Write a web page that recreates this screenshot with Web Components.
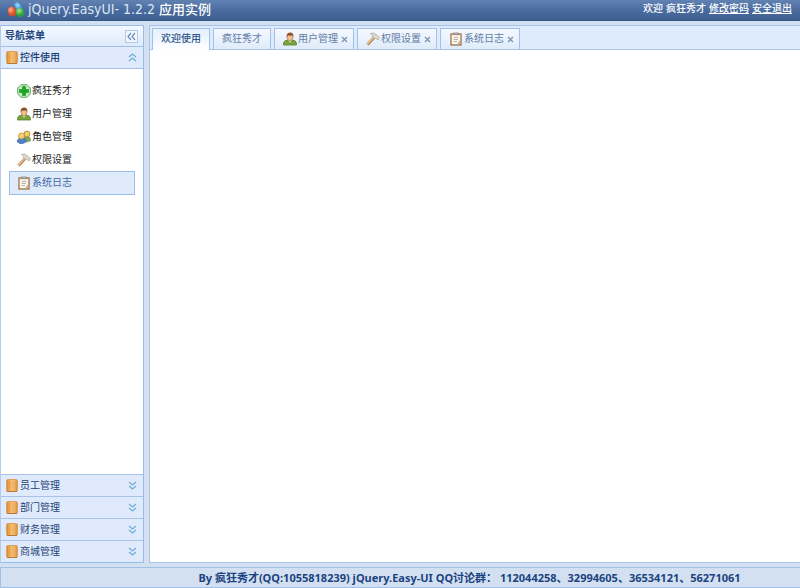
<!DOCTYPE html>
<html lang="zh-CN">
<head>
<meta charset="utf-8">
<title>jQuery.EasyUI 应用实例</title>
<style>
html,body{height:100%;margin:0}
body{font:10px/14px "DejaVu Sans Condensed","DejaVu Sans","Noto Sans CJK SC",sans-serif;color:#333;background:#d2e0f2}
</style>
</head>
<body>
<admin-app></admin-app>
<script>
const icons = {
  logo: `<svg width="18" height="18" viewBox="0 0 18 18"><defs><radialGradient id="r" cx=".4" cy=".3"><stop stop-color="#ffb28e"/><stop offset="1" stop-color="#df4a1d"/></radialGradient><radialGradient id="b" cx=".4" cy=".3"><stop stop-color="#9ce3f7"/><stop offset="1" stop-color="#2489d3"/></radialGradient><radialGradient id="g" cx=".4" cy=".3"><stop stop-color="#a6e488"/><stop offset="1" stop-color="#2ca03c"/></radialGradient></defs><path d="M7 4Q9 .5 12 3.500L16 8Q17 12 13 12L9 9Z" fill="url(#b)"/><ellipse cx="5" cy="11.500" rx="4.200" ry="5" transform="rotate(-15 5 11.500)" fill="url(#r)"/><ellipse cx="13" cy="12.500" rx="4.500" ry="4.600" fill="url(#g)"/></svg>`,
  book: `<svg width="12" height="14" viewBox="0 0 12 14"><defs><linearGradient id="o"><stop stop-color="#c98434"/><stop offset=".25" stop-color="#f0ac55"/><stop offset=".6" stop-color="#f9c67b"/><stop offset="1" stop-color="#d98a35"/></linearGradient></defs><rect x=".5" y=".5" width="11" height="12" rx="1.500" fill="url(#o)" stroke="#d9a061"/><path d="M1 12.500H11" stroke="#b57939"/><path d="M3.500 2V11M7 2V11" stroke="#e09747" opacity=".6"/></svg>`,
  add: `<svg width="14" height="14" viewBox="0 0 14 14"><path d="M4 .7H10L13.300 4V10L10 13.300H4L.7 10V4Z" fill="#c5e8c0" stroke="#63a565"/><path d="M5.500 2.500H8.500V5.500H11.500V8.500H8.500V11.500H5.500V8.500H2.500V5.500H5.500Z" fill="#17a91d" stroke="#0b8618" stroke-width=".5"/></svg>`,
  user: `<svg width="14" height="14" viewBox="0 0 14 14"><path d="M.6 13V11Q1 8.300 5 8H9Q13 8.300 13.400 11V13Z" fill="#7aa53e" stroke="#55802d" stroke-width=".8"/><path d="M5 8L7 10.500L9 8Z" fill="#e8eed2"/><ellipse cx="7" cy="5" rx="3" ry="3.800" fill="#f0bf91" stroke="#a36e43" stroke-width=".6"/><path d="M3.700 5.300Q3 1 7 .5Q11 .7 10.300 5.300L9.300 3.300Q7 4.300 5 3.200Z" fill="#8c522d"/></svg>`,
  users: `<svg width="14" height="14" viewBox="0 0 14 14"><path d="M6 10V8Q7 6 11 6.500Q14 7 13.500 11L9 12Z" fill="#87a75a" stroke="#678440" stroke-width=".5"/><circle cx="10" cy="4" r="3" fill="#f1ce65" stroke="#a97c32" stroke-width=".8"/><path d="M.5 12V10.500Q1 8 4.800 8Q9 8 9.300 11.500Q7 14 3 13.500Z" fill="#5181cd" stroke="#315aa5" stroke-width=".7"/><circle cx="4.500" cy="6" r="3" fill="#f5d776" stroke="#b38a39" stroke-width=".8"/></svg>`,
  hammer: `<svg width="14" height="14" viewBox="0 0 14 14"><path d="M1.500 12.500L8.500 5" stroke="#b5824f" stroke-width="3"/><path d="M1.300 12L8.300 4.500" stroke="#eac495" stroke-width="1.500"/><path d="M4.500 1.500Q7.500 0 10 2.500L13.500 5.500L12 8L9.500 6L8 6.500L6.500 4.500L7 3.500Z" fill="#ddd9cf" stroke="#aaa092" stroke-width=".7"/></svg>`,
  log: `<svg width="14" height="14" viewBox="0 0 14 14"><rect x="2" y="2" width="10" height="11" fill="#fffaf0" stroke="#9b7048" stroke-width="1.300"/><path d="M4.500 2.800V1H9.500V2.800Z" fill="#d1cbc2" stroke="#78706a" stroke-width=".7"/><path d="M4.500 5.500H9.500M4.500 7.500H9M4.500 9.500H8" stroke="#a69b92" stroke-width=".8"/><path d="M11 8V12H8Z" fill="#d6b28d"/></svg>`,
  down: `<svg width="9" height="9" viewBox="0 0 9 9"><path d="M1 1L4.500 4L8 1M1 5L4.500 8L8 5" fill="none" stroke="#72acd3" stroke-width="1.300"/></svg>`,
  up: `<svg width="9" height="9" viewBox="0 0 9 9"><path d="M1 4L4.500 1L8 4M1 8L4.500 5L8 8" fill="none" stroke="#72acd3" stroke-width="1.300"/></svg>`,
  left: `<svg width="9" height="9" viewBox="0 0 9 9"><path d="M4 1L1 4.500L4 8M8 1L5 4.500L8 8" fill="none" stroke="#6c8fb9" stroke-width="1.200"/></svg>`,
  close: `<svg width="7" height="7" viewBox="0 0 7 7"><path d="M1 1L6 6M6 1L1 6" stroke="#7e93ad" stroke-width="1.300"/></svg>`
};
const base = `*{box-sizing:border-box}button{font:inherit;color:inherit;background:none;border:0;padding:0;margin:0;cursor:pointer}svg{display:block;flex:none}`;
class Base extends HTMLElement {
  connectedCallback() {
    if (!this.shadowRoot) this.attachShadow({mode: 'open'}).innerHTML = `<style>${base}${this.css()}</style>${this.html()}`;
  }
  css() { return ''; }
  html() { return '<slot></slot>'; }
}
customElements.define('ui-icon', class extends Base {
  css() { return ':host{display:block;flex:none}'; }
  html() { return icons[this.getAttribute('name')]; }
});
customElements.define('app-header', class extends Base {
  css() { return `:host{display:flex;align-items:center;justify-content:space-between;height:21px;padding:0 8px 2px 7px;color:#fff;background:linear-gradient(#6282b2,#486a9e 55%,#3e608f);border-bottom:1px solid #365684}
    h1{display:flex;align-items:center;gap:3px;margin:0;font:400 14px/18px "DejaVu Sans Condensed","Noto Sans CJK SC",sans-serif;color:#dde6f3;white-space:nowrap}
    h1 b{font-size:13px;font-weight:500;color:#fff}
    nav{display:flex;gap:3px;font-weight:500;white-space:nowrap}a{color:inherit}`; }
  html() { return `<h1><ui-icon name="logo"></ui-icon><span>jQuery.EasyUI- 1.2.2 <b>应用实例</b></span></h1>
    <nav><span>欢迎</span><span>疯狂秀才</span><a href="#password">修改密码</a><a href="#logout">安全退出</a></nav>`; }
});
customElements.define('nav-group', class extends Base {
  css() { return `:host{display:flex;flex-direction:column;flex:none}:host([open]){flex:1}
    .bar{display:flex;align-items:center;gap:2px;width:100%;height:22px;padding:0 6px 0 5px;background:#dfebfd;border-bottom:1px solid #a3bfe6;color:#1f4475;text-align:left}
    :host([open]) .bar{font-weight:500;color:#183b70}
    :host(:not([open])) .bar{border-bottom:0;border-top:1px solid #a9c3e6}
    .bar span{flex:1}`; }
  html() { const open = this.hasAttribute('open');
    return `<button class="bar" aria-expanded="${open}"><ui-icon name="book"></ui-icon><span>${this.getAttribute('label')}</span><ui-icon name="${open ? 'up' : 'down'}"></ui-icon></button><slot></slot>`; }
});
customElements.define('nav-item', class extends Base {
  css() { return `:host{display:block}
    a{display:flex;align-items:center;gap:1px;height:23px;padding:0 7px;border:1px solid transparent;color:#222;text-decoration:none}
    :host([selected]) a{height:24px;background:#dfebfb;border-color:#9dbce6;color:#416aa3}`; }
  html() { return `<a href="#page"><ui-icon name="${this.getAttribute('icon')}"></ui-icon><span><slot></slot></span></a>`; }
});
customElements.define('side-nav', class extends Base {
  css() { return `:host{display:flex;flex-direction:column;flex:0 0 18%;min-width:130px;background:#fff;border:1px solid #99bbe8;border-left-color:#b4cbea}
    header{display:flex;align-items:center;justify-content:space-between;height:21px;flex:none;padding:0 5px 0 4px;background:linear-gradient(#f4f8ff,#deeafb);border-bottom:1px solid #a3bfe6}
    h2{font-size:10px;font-weight:700;margin:0;color:#24477d}
    header button{padding:1px;border:1px solid #b3c9e5;background:#f1f6fe}
    ul{list-style:none;margin:0;padding:10px 8px 0}`; }
  html() { return `<header><h2>导航菜单</h2><button aria-label="折叠导航"><ui-icon name="left"></ui-icon></button></header>
    <nav-group open label="控件使用"><ul>
    <li><nav-item icon="add">疯狂秀才</nav-item></li><li><nav-item icon="user">用户管理</nav-item></li><li><nav-item icon="users">角色管理</nav-item></li><li><nav-item icon="hammer">权限设置</nav-item></li><li><nav-item icon="log" selected>系统日志</nav-item></li></ul></nav-group>
    <nav-group label="员工管理"></nav-group><nav-group label="部门管理"></nav-group><nav-group label="财务管理"></nav-group><nav-group label="商城管理"></nav-group>`; }
});
customElements.define('tab-item', class extends Base {
  css() { return `:host{display:flex;align-items:center;gap:3px;height:21px;padding:0 8px;border:1px solid #a3c0e8;border-bottom:0;background:linear-gradient(#f5f9ff,#dfebfb);color:#637da5;white-space:nowrap}
    :host([closable]){padding-right:5px}
    :host([selected]){height:22px;margin-bottom:-1px;padding-bottom:1px;background:linear-gradient(#e4effe,#fff);color:#2f568c;font-weight:500}
    button{display:flex;align-items:center;gap:1px}`; }
  html() { const icon = this.getAttribute('icon');
    return `<button role="tab" aria-selected="${this.hasAttribute('selected')}">${icon ? `<ui-icon name="${icon}"></ui-icon>` : ''}<slot></slot></button>${this.hasAttribute('closable') ? '<button aria-label="关闭"><ui-icon name="close"></ui-icon></button>' : ''}`; }
});
customElements.define('tab-panel', class extends Base {
  css() { return `:host{display:flex;flex-direction:column;flex:1;min-width:0;background:#fff;border:1px solid #a8c3e8;border-right:0}
    .tabs{display:flex;align-items:flex-end;gap:3px;height:24px;flex:none;padding:0 2px;background:#ddebfc;border-bottom:1px solid #a9c5e8}
    main{flex:1}`; }
  html() { return `<div class="tabs" role="tablist"><tab-item selected>欢迎使用</tab-item><tab-item>疯狂秀才</tab-item><tab-item icon="user" closable>用户管理</tab-item><tab-item icon="hammer" closable>权限设置</tab-item><tab-item icon="log" closable>系统日志</tab-item></div><main></main>`; }
});
customElements.define('app-footer', class extends Base {
  css() { return `:host{display:block;padding:3px 0 2px 138px;text-align:center;border:1px solid #a2bfe6;border-right:0;background:#d2e0f2;color:#1c4380;font:700 11px/14px "Noto Sans","Noto Sans CJK SC",sans-serif}`; }
});
customElements.define('admin-app', class extends Base {
  css() { return `:host{display:flex;flex-direction:column;height:100vh}
    .body{display:flex;flex:1;min-height:0;gap:5px;padding:4px 0}`; }
  html() { return `<app-header></app-header><div class="body"><side-nav></side-nav><tab-panel></tab-panel></div><app-footer>By 疯狂秀才(QQ:1055818239) jQuery.Easy-UI QQ讨论群： 112044258、32994605、36534121、56271061</app-footer>`; }
});
</script>
</body>
</html>
